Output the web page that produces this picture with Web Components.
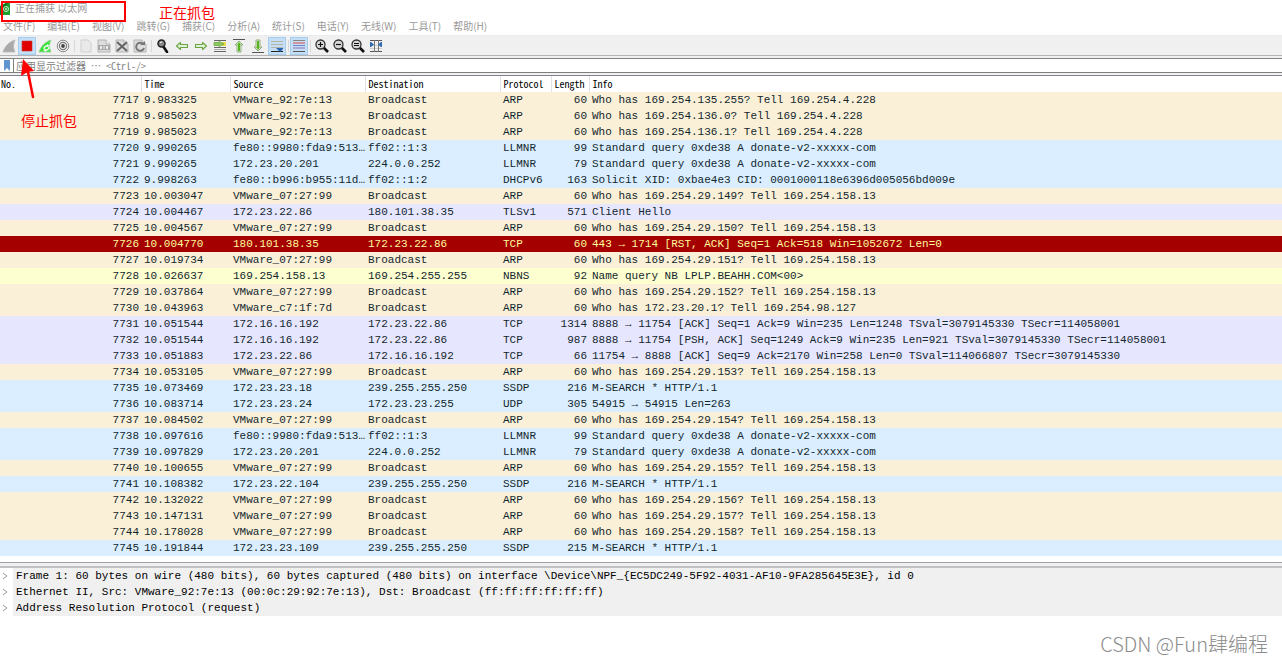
<!DOCTYPE html>
<html lang="zh-CN">
<head>
<meta charset="utf-8">
<title>正在捕获 以太网</title>
<style>
  html, body { margin: 0; background: #fff; }
  body {
    --ui: "Noto Sans CJK SC", sans-serif;
    --mono: "Liberation Mono", "Noto Sans CJK SC", monospace;
    --narrow: "Noto Sans Mono CJK SC", "Liberation Mono", monospace;
    font-family: var(--ui);
  }
</style>
</head>
<body>
<capture-window>
  <title-bar slot="chrome">正在捕获 以太网</title-bar>
  <menu-bar slot="chrome">
    <menu-entry>文件(F)</menu-entry><menu-entry>编辑(E)</menu-entry><menu-entry>视图(V)</menu-entry>
    <menu-entry>跳转(G)</menu-entry><menu-entry>捕获(C)</menu-entry><menu-entry>分析(A)</menu-entry>
    <menu-entry>统计(S)</menu-entry><menu-entry>电话(Y)</menu-entry><menu-entry>无线(W)</menu-entry>
    <menu-entry>工具(T)</menu-entry><menu-entry>帮助(H)</menu-entry>
  </menu-bar>
  <tool-bar slot="chrome">
    <tool-group>
      <tool-button icon="start" label="开始捕获"></tool-button>
      <tool-button icon="stop" label="停止捕获" active></tool-button>
      <tool-button icon="restart" label="重新开始捕获"></tool-button>
      <tool-button icon="options" label="捕获选项"></tool-button>
    </tool-group>
    <tool-group>
      <tool-button icon="open" label="打开"></tool-button>
      <tool-button icon="save" label="保存"></tool-button>
      <tool-button icon="close" label="关闭"></tool-button>
      <tool-button icon="reload" label="重新加载"></tool-button>
    </tool-group>
    <tool-group wide>
      <tool-button icon="find" label="查找分组"></tool-button>
      <tool-button icon="back" label="上一分组"></tool-button>
      <tool-button icon="forward" label="下一分组"></tool-button>
      <tool-button icon="goto" label="转到分组"></tool-button>
      <tool-button icon="first" label="首个分组"></tool-button>
      <tool-button icon="last" label="最新分组"></tool-button>
      <tool-button icon="autoscroll" label="自动滚动" active></tool-button>
    </tool-group>
    <tool-group>
      <tool-button icon="colorize" label="着色" active></tool-button>
    </tool-group>
    <tool-group>
      <tool-button icon="zoomin" label="放大"></tool-button>
      <tool-button icon="zoomout" label="缩小"></tool-button>
      <tool-button icon="zoomreset" label="正常大小"></tool-button>
      <tool-button icon="columns" label="调整列宽"></tool-button>
    </tool-group>
  </tool-bar>
  <filter-bar slot="chrome"></filter-bar>
  <packet-list></packet-list>
  <detail-pane>
    <detail-node>Frame 1: 60 bytes on wire (480 bits), 60 bytes captured (480 bits) on interface \Device\NPF_{EC5DC249-5F92-4031-AF10-9FA285645E3E}, id 0</detail-node>
    <detail-node>Ethernet II, Src: VMware_92:7e:13 (00:0c:29:92:7e:13), Dst: Broadcast (ff:ff:ff:ff:ff:ff)</detail-node>
    <detail-node>Address Resolution Protocol (request)</detail-node>
  </detail-pane>
  <page-credit>CSDN @Fun肆编程</page-credit>
  <capture-notes slot="notes"></capture-notes>
</capture-window>

<script>
const define = (name, html, setup) => {
  const template = document.createElement('template');
  template.innerHTML = html;
  customElements.define(name, class extends HTMLElement {
    constructor() {
      super();
      this.attachShadow({ mode: 'open' }).append(template.content.cloneNode(true));
    }
    connectedCallback() { if (setup) setup(this, this.shadowRoot); }
  });
};

define('capture-window', `
  <style>
    :host { display: block; position: relative; }
    header, main { display: flex; flex-direction: column; }
  </style>
  <header><slot name="chrome"></slot></header>
  <main><slot></slot></main>
  <slot name="notes"></slot>`);

define('title-bar', `
  <style>
    :host { display: flex; align-items: center; gap: 4px; height: 18px; color: #999; font-size: 10px; line-height: 16px; }
    svg { display: block; width: 11px; height: 14px; }
    h1 { margin: 0 0 3px; font: inherit; }
  </style>
  <svg viewBox="0 0 11 14" aria-hidden="true">
    <path d="M0 4 6 1h4v12H0z" fill="#1e9e2c"/><path d="M0 4 6 1h2L2 13H0z" fill="#0b7a1a"/>
    <circle cx="6" cy="7" r="2.5" fill="none" stroke="#c9f2cd"/><circle cx="6" cy="7" r="1" fill="#c9f2cd"/>
  </svg>
  <h1><slot></slot></h1>`);

define('menu-bar', `
  <style>
    :host { display: block; border-bottom: 1px solid #ececec; }
    nav { display: flex; gap: 12px; height: 17px; padding-left: 3px; }
  </style>
  <nav><slot></slot></nav>`);

define('menu-entry', `
  <style>
    :host { display: block; }
    button { display: block; border: 0; padding: 0; background: none; color: #999; font-family: inherit; font-size: 10px; line-height: 16px; white-space: nowrap; }
  </style>
  <button type="button"><slot></slot></button>`);

define('tool-bar', `
  <style>
    :host { display: flex; height: 19px; align-items: center; background: #f0f0f0; border-bottom: 1px solid #b4b4b4; }
  </style>
  <slot></slot>`);

define('tool-group', `
  <style>
    :host { display: flex; }
    :host([wide]) { gap: 1px; }
    :host(:not(:last-child))::after { content: ""; width: 1px; margin: 3px 2px; background: #d8d8d8; }
    :host([wide])::after { margin: 3px 1px; }
  </style>
  <slot></slot>`);

const fin = (a, b) => `<path d="M2 14C4 8 8 4 14 2c-2 4-2 8 0 12z" fill="${a}" stroke="${b}" stroke-width="1"/>`;
const page = `<path d="M3 2h7l3 3v9H3z" fill="#e9e9e9" stroke="#cfcfcf"/>`;
const doc = `<path d="M2 2h8l4 4v8H2z" fill="#ddd" stroke="#b4b4b4"/><path d="M10 2v4h4" fill="#f6f6f6" stroke="#b4b4b4"/>`;
const lens = inner => `<path d="m9 9 5 5" stroke="#111" stroke-width="2.6"/><circle cx="6.500" cy="6.500" r="4.500" fill="#d8d8d8" stroke="#333" stroke-width="1.300"/>${inner}`;
const arrow = d => `<path d="${d}" fill="#e2f2d6" stroke="#6aa545" stroke-width="1.1" stroke-linejoin="round"/>`;
const upright = d => `<path d="${d}" fill="#e6efe0" stroke="#8fae7c" stroke-width="1" stroke-linejoin="round"/>`;
const ICONS = {
  start: fin('#a9a9a9', '#bcbcbc'),
  stop: `<path d="M3 3h10v10H3z" fill="#e00000" stroke="#c63a3a" stroke-width=".6"/>`,
  restart: fin('#35e335', '#9bd49b') + `<path d="M7 11a3 3 0 0 1 4-3M12 9a3 3 0 0 1-4 3" fill="none" stroke="#fff" stroke-width="1.300"/><path d="m10 6 3 2-3 1zM9 14l-3-2 3-1z" fill="#fff"/>`,
  options: `<circle cx="8" cy="8" r="5.800" fill="#f4f4f4" stroke="#8a8a8a"/><circle cx="8" cy="8" r="3.600" fill="none" stroke="#777" stroke-width="1.200"/><circle cx="8" cy="8" r="1.900" fill="#444"/>`,
  open: page,
  save: doc + `<path d="M2 7h12v5H2z" fill="#aaa"/><path d="M4.500 8.500h1v2h-1zM8 8v3M10.500 8.500h1v2h-1z" fill="none" stroke="#f4f4f4"/>`,
  close: doc + `<path d="m3 4 10 9M13 4 3 13" stroke="#666" stroke-width="2"/>`,
  reload: doc + `<path d="M11 6a4 4 0 1 0 1 4" fill="none" stroke="#777" stroke-width="2"/><path d="M8 7h5V3z" fill="#777"/>`,
  find: `<path d="m8 8 4 6" stroke="#111" stroke-width="2.600" stroke-linecap="round"/><circle cx="6.500" cy="5.500" r="3.500" fill="#888" stroke="#222" stroke-width="1.500"/><path d="M5 5a2 2 0 0 1 2-1" stroke="#fff" fill="none"/>`,
  back: arrow('M2.500 8l4-3.500v2h7v3h-7v2z'),
  forward: arrow('M13.500 8l-4-3.500v2h-7v3h7v2z'),
  goto: `<path d="M2 2.500h12M2 9.500h12M2 13.500h12" stroke="#666"/><path d="M2 11.500h12" stroke="#aaa"/><path d="M10 4h4v4h-4z" fill="#eadb4c"/><path d="M2 4.500h5V3.500l5 2.500-5 2.500V7.500H2z" fill="#8ccb5e" stroke="#6aa545" stroke-width=".8"/>`,
  first: `<path d="M2 1.500h12" stroke="#555"/>` + upright('M8 3 4 7h2v7h4V7h2z') + `<path d="M8 6v7" stroke="#58b51c" stroke-width="2"/><path d="M8 4 6 7h4z" fill="#58b51c"/>`,
  last: `<path d="M2 14.500h12" stroke="#555"/>` + upright('M8 13 4 9h2V2h4v7h2z') + `<path d="M8 3v7" stroke="#58b51c" stroke-width="2"/><path d="M8 12 6 9h4z" fill="#58b51c"/>`,
  autoscroll: `<path d="M2 3.500h12M2 6.500h12M2 9.500h12" stroke="#b4b4a8"/><path d="M2 13.500h12" stroke="#222"/><path d="M7 10h7v1l-3 3-3-3z" fill="#2b65b0"/>`,
  colorize: `<path d="M2 2.500h12" stroke="#888"/><path d="M2 5h12" stroke="#e04848"/><path d="M2 7.500h12" stroke="#7088cc"/><path d="M2 10h12" stroke="#9774b2"/><path d="M2 13.500h12" stroke="#555"/>`,
  zoomin: lens('<path d="M4 6.500h5M6.500 4v5" stroke="#111" stroke-width="1.200"/>'),
  zoomout: lens('<path d="M4 6.500h5" stroke="#111" stroke-width="1.200"/>'),
  zoomreset: lens('<path d="M4 5.500h5M4 7.500h5" stroke="#111"/>'),
  columns: `<path d="M2 7.500h12M2 10.500h12" stroke="#ccc"/><path d="M2 2.500h12M2 13.500h12" stroke="#555"/><path d="M6.500 2v12M10.500 2v12" stroke="#777"/><path d="M2 4h1l3 2.500L3 9H2zM14 4h-1l-3 2.500L13 9h1z" fill="#2f6ab5"/>`
};

define('tool-button', `
  <style>
    :host { display: block; }
    button { display: grid; place-items: center; box-sizing: border-box; width: 18px; height: 18px; padding: 0; border: 1px solid transparent; background: none; }
    :host([active]) button { background: #c3def5; border-color: #a4cdf0; }
    svg { display: block; width: 14px; height: 14px; fill: none; }
  </style>
  <button type="button"><svg viewBox="1 1 14 14" aria-hidden="true"></svg></button>`,
  (host, root) => {
    root.querySelector('button').setAttribute('aria-label', host.getAttribute('label'));
    root.querySelector('svg').innerHTML = ICONS[host.getAttribute('icon')];
  });

define('filter-bar', `
  <style>
    :host { display: block; padding: 2px 0; background: #f0f0f0; border-bottom: 1px solid #82828c; }
    form { display: flex; height: 13px; border: solid #808080; border-width: 1px 0; background: #fff; }
    button { display: grid; place-items: center; width: 14px; padding: 0; border: 0; border-right: 1px solid #808080; background: #fff; }
    svg { display: block; width: 8px; height: 11px; }
    input { flex: 1; min-width: 0; padding: 0 2px; border: 0; outline: 0; background: none; font-family: var(--narrow); font-size: 10px; line-height: 13px; }
    input::placeholder { color: #808080; opacity: 1; }
  </style>
  <form>
    <button type="button" aria-label="书签"><svg viewBox="0 0 8 11"><path d="M1 0h6v11L4 8l-3 3z" fill="#5f94cf"/></svg></button>
    <input type="text" aria-label="显示过滤器" placeholder="应用显示过滤器 … &lt;Ctrl-/&gt;">
  </form>`);

const PACKETS = `arp|7717|9.983325|VMware_92:7e:13|Broadcast|ARP|60|Who has 169.254.135.255? Tell 169.254.4.228
arp|7718|9.985023|VMware_92:7e:13|Broadcast|ARP|60|Who has 169.254.136.0? Tell 169.254.4.228
arp|7719|9.985023|VMware_92:7e:13|Broadcast|ARP|60|Who has 169.254.136.1? Tell 169.254.4.228
udp|7720|9.990265|fe80::9980:fda9:513…|ff02::1:3|LLMNR|99|Standard query 0xde38 A donate-v2-xxxxx-com
udp|7721|9.990265|172.23.20.201|224.0.0.252|LLMNR|79|Standard query 0xde38 A donate-v2-xxxxx-com
udp|7722|9.998263|fe80::b996:b955:11d…|ff02::1:2|DHCPv6|163|Solicit XID: 0xbae4e3 CID: 0001000118e6396d005056bd009e
arp|7723|10.003047|VMware_07:27:99|Broadcast|ARP|60|Who has 169.254.29.149? Tell 169.254.158.13
tcp|7724|10.004467|172.23.22.86|180.101.38.35|TLSv1|571|Client Hello
arp|7725|10.004567|VMware_07:27:99|Broadcast|ARP|60|Who has 169.254.29.150? Tell 169.254.158.13
rst|7726|10.004770|180.101.38.35|172.23.22.86|TCP|60|443 → 1714 [RST, ACK] Seq=1 Ack=518 Win=1052672 Len=0
arp|7727|10.019734|VMware_07:27:99|Broadcast|ARP|60|Who has 169.254.29.151? Tell 169.254.158.13
smb|7728|10.026637|169.254.158.13|169.254.255.255|NBNS|92|Name query NB LPLP.BEAHH.COM<00>
arp|7729|10.037864|VMware_07:27:99|Broadcast|ARP|60|Who has 169.254.29.152? Tell 169.254.158.13
arp|7730|10.043963|VMware_c7:1f:7d|Broadcast|ARP|60|Who has 172.23.20.1? Tell 169.254.98.127
tcp|7731|10.051544|172.16.16.192|172.23.22.86|TCP|1314|8888 → 11754 [ACK] Seq=1 Ack=9 Win=235 Len=1248 TSval=3079145330 TSecr=114058001
tcp|7732|10.051544|172.16.16.192|172.23.22.86|TCP|987|8888 → 11754 [PSH, ACK] Seq=1249 Ack=9 Win=235 Len=921 TSval=3079145330 TSecr=114058001
tcp|7733|10.051883|172.23.22.86|172.16.16.192|TCP|66|11754 → 8888 [ACK] Seq=9 Ack=2170 Win=258 Len=0 TSval=114066807 TSecr=3079145330
arp|7734|10.053105|VMware_07:27:99|Broadcast|ARP|60|Who has 169.254.29.153? Tell 169.254.158.13
udp|7735|10.073469|172.23.23.18|239.255.255.250|SSDP|216|M-SEARCH * HTTP/1.1
udp|7736|10.083714|172.23.23.24|172.23.23.255|UDP|305|54915 → 54915 Len=263
arp|7737|10.084502|VMware_07:27:99|Broadcast|ARP|60|Who has 169.254.29.154? Tell 169.254.158.13
udp|7738|10.097616|fe80::9980:fda9:513…|ff02::1:3|LLMNR|99|Standard query 0xde38 A donate-v2-xxxxx-com
udp|7739|10.097829|172.23.20.201|224.0.0.252|LLMNR|79|Standard query 0xde38 A donate-v2-xxxxx-com
arp|7740|10.100655|VMware_07:27:99|Broadcast|ARP|60|Who has 169.254.29.155? Tell 169.254.158.13
udp|7741|10.108382|172.23.22.104|239.255.255.250|SSDP|216|M-SEARCH * HTTP/1.1
arp|7742|10.132022|VMware_07:27:99|Broadcast|ARP|60|Who has 169.254.29.156? Tell 169.254.158.13
arp|7743|10.147131|VMware_07:27:99|Broadcast|ARP|60|Who has 169.254.29.157? Tell 169.254.158.13
arp|7744|10.178028|VMware_07:27:99|Broadcast|ARP|60|Who has 169.254.29.158? Tell 169.254.158.13
udp|7745|10.191844|172.23.23.109|239.255.255.250|SSDP|215|M-SEARCH * HTTP/1.1`;

define('packet-list', `
  <style>
    :host { display: block; padding-bottom: 6px; font-family: var(--mono); color: #12272e; }
    table { width: 100%; table-layout: fixed; border-collapse: collapse; }
    th, td { padding: 0 2px 0 3px; text-align: left; font-weight: 400; white-space: nowrap; }
    th { height: 16px; font-family: var(--narrow); font-size: 10px; line-height: 16px; color: #000; border-right: 1px solid #e2e2e2; }
    th:first-child { padding-left: 1px; }
    th:last-child { border-right: 0; }
    td { height: 16px; font-size: 11px; line-height: 16px; }
    td:nth-child(1), td:nth-child(6) { text-align: right; }
    .arp { background: #faf0d7; } .udp { background: #daeeff; } .tcp { background: #e7e6ff; }
    .smb { background: #feffd0; } .rst { background: #a40000; color: #fffc9c; }
    .no { width: 141px; } .time { width: 89px; } .addr { width: 135px; } .proto { width: 51px; } .len { width: 38px; }
  </style>
  <table>
    <colgroup><col class="no"><col class="time"><col class="addr"><col class="addr"><col class="proto"><col class="len"><col></colgroup>
    <thead><tr><th scope="col">No.</th><th scope="col">Time</th><th scope="col">Source</th><th scope="col">Destination</th><th scope="col">Protocol</th><th scope="col">Length</th><th scope="col">Info</th></tr></thead>
    <tbody></tbody>
  </table>`,
  (host, root) => {
    const body = root.querySelector('tbody');
    for (const line of PACKETS.split('\n')) {
      const [kind, ...cells] = line.split('|');
      const row = body.insertRow();
      row.className = kind;
      for (const text of cells) row.insertCell().textContent = text;
    }
  });

define('detail-pane', `
  <style>
    :host { display: block; border-top: 1px solid #a0a0a8; background: #f0f0f0; font-family: var(--mono); color: #000; }
    section { margin-top: 3px; border-top: 2px solid #c2c2c6; }
  </style>
  <section aria-label="分组详情"><slot></slot></section>`);

define('detail-node', `
  <style>
    :host { display: block; }
    summary { display: flex; list-style: none; font-size: 11px; line-height: 16px; white-space: nowrap; }
    svg { flex: none; width: 13px; height: 16px; margin-right: 3px; background: #fff; }
  </style>
  <details><summary><svg viewBox="0 0 13 16" aria-hidden="true"><path d="m3 5 4 3-4 3" fill="none" stroke="#999"/></svg><slot></slot></summary></details>`);

define('page-credit', `
  <style>
    :host { display: block; padding: 14px 14px 4px; text-align: right; font-size: 20px; line-height: 28px; font-weight: 300; color: #8c8c8c; }
  </style>
  <slot></slot>`);

define('capture-notes', `
  <style>
    :host { position: absolute; inset: 0 auto auto 0; width: 220px; height: 132px; pointer-events: none; color: #f00; font-size: 14px; line-height: 18px; }
    .frame { position: absolute; left: 1px; top: 1px; box-sizing: border-box; width: 125px; height: 21px; border: 2px solid #f00; }
    svg { position: absolute; left: 18px; top: 58px; width: 20px; height: 42px; }
    .capturing { position: absolute; left: 159px; top: 3px; }
    .stop { position: absolute; left: 21px; top: 111px; }
  </style>
  <div class="frame"></div>
  <span class="capturing">正在抓包</span>
  <svg viewBox="0 0 20 42" aria-hidden="true"><path d="M10 14 15 39" stroke="#f00" stroke-width="2.500" stroke-linecap="round"/><path d="M5 1 16 13 9.500 14 3 18z" fill="#f00"/></svg>
  <span class="stop">停止抓包</span>`);
</script>
</body>
</html>
